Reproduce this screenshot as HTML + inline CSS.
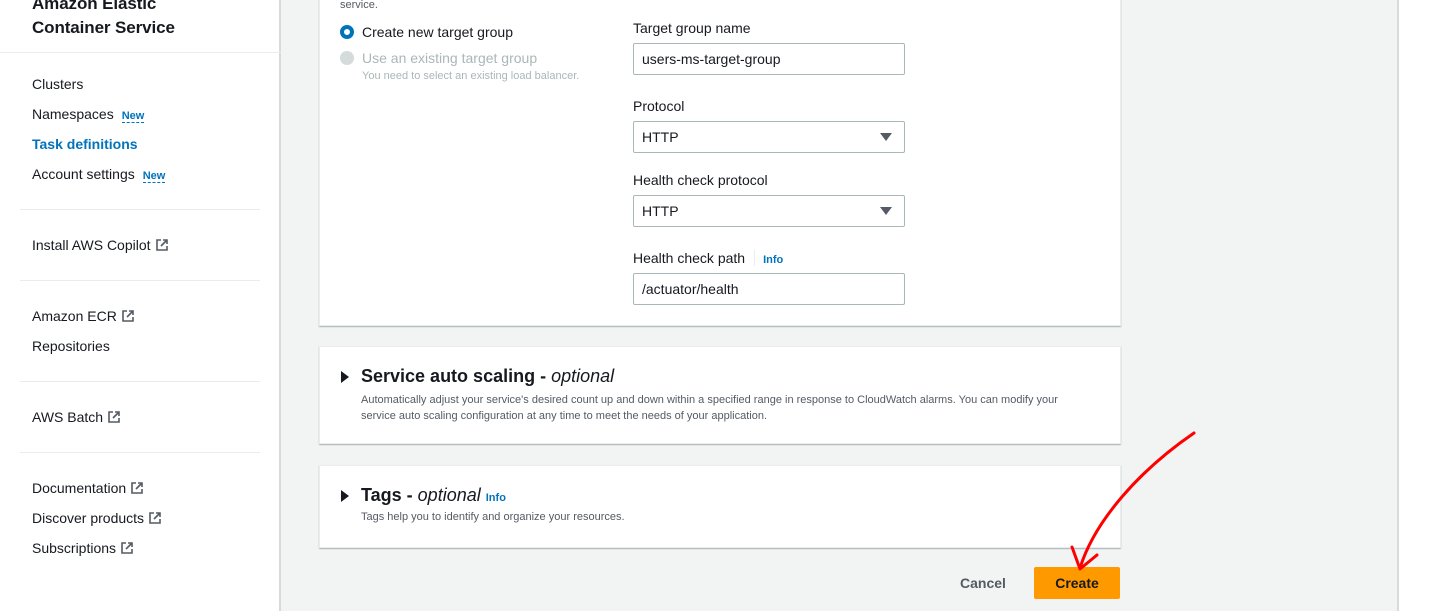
<!DOCTYPE html>
<html><head><style>
*{margin:0;padding:0;box-sizing:border-box}
body{width:1436px;height:611px;overflow:hidden;background:#fff;font-family:"Liberation Sans",sans-serif;color:#16191f;position:relative}
.a{position:absolute}
#side{left:0;top:0;width:281px;height:611px;background:#fff;border-right:2px solid #d5dbdb}
#main{left:281px;top:0;width:1118px;height:611px;background:#f2f3f3;border-right:2px solid #d5dbdb}
.nav{font-size:14px;color:#16191f;left:32px}
.new{font-size:11px;font-weight:bold;color:#0073bb;border-bottom:1px dashed #0073bb;margin-left:8px}
.hr{left:20px;width:240px;height:1px;background:#eaeded}
.card{background:#fff;border:1px solid #eaeded;box-shadow:0 1px 1px rgba(0,28,36,.3)}
.lbl{font-size:14px;left:633px}
.inp{left:633px;width:272px;height:32px;border:1px solid #aab7b8;border-radius:2px;font-size:14px;padding:7px 8px;background:#fff}
.tri{position:absolute;right:12px;top:11px;width:0;height:0;border-left:6px solid transparent;border-right:6px solid transparent;border-top:8px solid #545b64}
.ext{display:inline-block;width:12px;height:12px;vertical-align:-1px;margin-left:5px}
</style></head><body>
<div id="side" class="a">
<div class="a" style="left:32px;top:-8px;font-size:17px;font-weight:bold;line-height:24px;letter-spacing:-0.1px">Amazon Elastic<br>Container Service</div>
<div class="a" style="left:0;top:52px;width:281px;height:1px;background:#eaeded"></div>
<div class="a nav" style="top:76px">Clusters</div>
<div class="a nav" style="top:106px">Namespaces<span class="new">New</span></div>
<div class="a nav" style="top:136px;color:#0073bb;font-weight:bold">Task definitions</div>
<div class="a nav" style="top:166px">Account settings<span class="new">New</span></div>
<div class="a hr" style="top:209px"></div>
<div class="a nav" style="top:237px">Install AWS Copilot<svg class="ext" viewBox="0 0 12 12"><path d="M5 1H1v10h10V7M7 1h4v4M11 1 5 7" fill="none" stroke="#545b64" stroke-width="1.6"/></svg></div>
<div class="a hr" style="top:280px"></div>
<div class="a nav" style="top:308px">Amazon ECR<svg class="ext" viewBox="0 0 12 12"><path d="M5 1H1v10h10V7M7 1h4v4M11 1 5 7" fill="none" stroke="#545b64" stroke-width="1.6"/></svg></div>
<div class="a nav" style="top:338px">Repositories</div>
<div class="a hr" style="top:381px"></div>
<div class="a nav" style="top:409px">AWS Batch<svg class="ext" viewBox="0 0 12 12"><path d="M5 1H1v10h10V7M7 1h4v4M11 1 5 7" fill="none" stroke="#545b64" stroke-width="1.6"/></svg></div>
<div class="a hr" style="top:452px"></div>
<div class="a nav" style="top:480px">Documentation<svg class="ext" viewBox="0 0 12 12"><path d="M5 1H1v10h10V7M7 1h4v4M11 1 5 7" fill="none" stroke="#545b64" stroke-width="1.6"/></svg></div>
<div class="a nav" style="top:510px">Discover products<svg class="ext" viewBox="0 0 12 12"><path d="M5 1H1v10h10V7M7 1h4v4M11 1 5 7" fill="none" stroke="#545b64" stroke-width="1.6"/></svg></div>
<div class="a nav" style="top:540px">Subscriptions<svg class="ext" viewBox="0 0 12 12"><path d="M5 1H1v10h10V7M7 1h4v4M11 1 5 7" fill="none" stroke="#545b64" stroke-width="1.6"/></svg></div>
</div>
<div id="main" class="a"></div>
<div class="a card" style="left:319px;top:-10px;width:802px;height:336px"></div>
<div class="a" style="left:340px;top:-1px;font-size:11px;color:#545b64">service.</div>
<div class="a" style="left:340px;top:25px;width:14px;height:14px;border-radius:50%;border:4px solid #0073bb;background:#fff"></div>
<div class="a" style="left:362px;top:24px;font-size:14px">Create new target group</div>
<div class="a" style="left:340px;top:51px;width:14px;height:14px;border-radius:50%;background:#d5dbdb"></div>
<div class="a" style="left:362px;top:50px;font-size:14px;color:#aab7b8">Use an existing target group</div>
<div class="a" style="left:362px;top:70px;font-size:11px;color:#aab7b8">You need to select an existing load balancer.</div>
<div class="a lbl" style="top:20px">Target group name</div>
<div class="a inp" style="top:43px">users-ms-target-group</div>
<div class="a lbl" style="top:98px">Protocol</div>
<div class="a inp" style="top:121px">HTTP<div class="tri"></div></div>
<div class="a lbl" style="top:172px">Health check protocol</div>
<div class="a inp" style="top:195px">HTTP<div class="tri"></div></div>
<div class="a lbl" style="top:250px">Health check path<span style="display:inline-block;width:1px;height:16px;background:#eaeded;margin:0 8px -3px 9px"></span><span style="font-size:11px;font-weight:bold;color:#0073bb">Info</span></div>
<div class="a inp" style="top:273px">/actuator/health</div>

<div class="a card" style="left:319px;top:346px;width:802px;height:98px"></div>
<div class="a" style="left:341px;top:371px;width:0;height:0;border-top:6px solid transparent;border-bottom:6px solid transparent;border-left:8px solid #16191f"></div>
<div class="a" style="left:361px;top:366px;font-size:18px;font-weight:bold">Service auto scaling - <i style="font-weight:normal">optional</i></div>
<div class="a" style="left:361px;top:392px;font-size:11px;line-height:16px;color:#545b64;width:720px">Automatically adjust your service's desired count up and down within a specified range in response to CloudWatch alarms. You can modify your service auto scaling configuration at any time to meet the needs of your application.</div>

<div class="a card" style="left:319px;top:465px;width:802px;height:83px"></div>
<div class="a" style="left:341px;top:490px;width:0;height:0;border-top:6px solid transparent;border-bottom:6px solid transparent;border-left:8px solid #16191f"></div>
<div class="a" style="left:361px;top:485px;font-size:18px;font-weight:bold">Tags - <i style="font-weight:normal">optional</i> <span style="font-size:11px;color:#0073bb;font-weight:bold">Info</span></div>
<div class="a" style="left:361px;top:511px;font-size:11px;color:#545b64">Tags help you to identify and organize your resources.</div>

<div class="a" style="left:960px;top:575px;font-size:14px;font-weight:bold;color:#545b64">Cancel</div>
<div class="a" style="left:1034px;top:567px;width:86px;height:32px;background:#ff9900;border-radius:2px;font-size:14px;font-weight:bold;text-align:center;line-height:32px">Create</div>

<svg class="a" style="left:0;top:0" width="1436" height="611"><path d="M1194 433 C1140 470 1095 520 1080 568" fill="none" stroke="#f00" stroke-width="3" stroke-linecap="round"/><path d="M1072 547 L1080 569 L1097 555" fill="none" stroke="#f00" stroke-width="3" stroke-linecap="round" stroke-linejoin="round"/></svg>
</body></html>
